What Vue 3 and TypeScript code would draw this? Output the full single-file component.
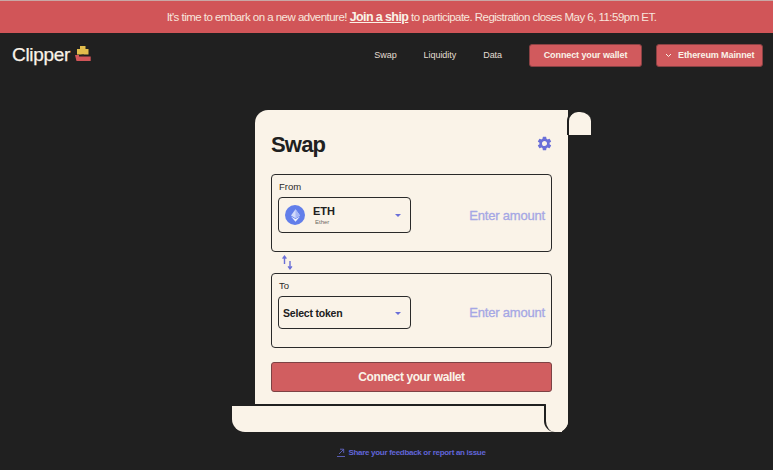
<script setup lang="ts">
const links: string[] = ['Swap', 'Liquidity', 'Data']
</script>

<template>
  <div class="page">
    <div class="banner">
      It's time to embark on a new adventure!&nbsp;<a class="join">Join a ship</a>&nbsp;to participate. Registration closes May 6, 11:59pm ET.
    </div>
    <header class="nav">
      <div class="brand">
        <span class="logo-text">Clipper</span>
        <svg class="ship" width="16" height="15" viewBox="0 0 16 15">
          <rect x="5" y="0" width="5.500" height="3" fill="#e2bd4c" />
          <rect x="2" y="3" width="11.500" height="5.500" fill="#e2bd4c" />
          <rect x="6.500" y="8.500" width="2.500" height="1" fill="#3a2a20" />
          <path d="M0 9h4v1.500h11.700V15H1.500z" fill="#d15558" />
        </svg>
      </div>
      <nav class="links">
        <a v-for="l in links" :key="l" class="link">{{ l }}</a>
      </nav>
      <button class="nav-btn wallet">Connect your wallet</button>
      <button class="nav-btn network">
        <svg width="7" height="5" viewBox="0 0 7 5"><path d="M1 1l2.500 2.500L6 1" fill="none" stroke="#faf3e8" stroke-width="1" /></svg>
        Ethereum Mainnet
      </button>
    </header>

    <main class="main">
      <section class="card">
        <div class="curl-top"></div>
        <div class="curl-bottom"></div>
        <div class="head">
          <h1>Swap</h1>
          <svg class="gear" width="17" height="17" viewBox="0 0 24 24">
            <path fill="#6a6fd8" d="M19.140 12.940c.04-.3.06-.61.06-.94 0-.32-.02-.64-.07-.94l2.030-1.580a.49.49 0 0 0 .12-.61l-1.920-3.320a.49.49 0 0 0-.59-.22l-2.390.96a7 7 0 0 0-1.620-.94l-.36-2.540a.48.48 0 0 0-.48-.41h-3.840a.47.47 0 0 0-.47.41l-.36 2.540c-.59.24-1.130.57-1.620.94l-2.390-.96a.48.48 0 0 0-.59.22L2.740 8.870a.47.47 0 0 0 .12.61l2.030 1.580c-.05.3-.09.63-.09.94s.02.64.07.94l-2.030 1.580a.49.49 0 0 0-.12.61l1.920 3.320c.12.22.37.29.59.22l2.390-.96c.5.38 1.030.7 1.620.94l.36 2.540c.05.24.24.41.48.41h3.840c.24 0 .44-.17.47-.41l.36-2.540c.59-.24 1.130-.56 1.620-.94l2.390.96c.22.08.47 0 .59-.22l1.920-3.320a.47.47 0 0 0-.12-.61zM12 15.600A3.610 3.610 0 0 1 8.400 12c0-1.980 1.620-3.600 3.600-3.600s3.600 1.620 3.600 3.600-1.620 3.600-3.600 3.600z" />
          </svg>
        </div>

        <div class="box from">
          <div class="label">From</div>
          <div class="row">
            <div class="select">
              <span class="eth-icon">
                <svg width="9" height="13" viewBox="0 0 10 14">
                  <path d="M5 0L0 7l5 3 5-3z" fill="#d3dbfa" />
                  <path d="M0 8l5 6 5-6-5 3z" fill="#eef1fd" />
                  <path d="M5 0v10l5-3z" fill="#a9b8f6" />
                </svg>
              </span>
              <span class="token">
                <span class="sym">ETH</span>
                <span class="name">Ether</span>
              </span>
              <span class="caret"></span>
            </div>
            <span class="amount">Enter amount</span>
          </div>
        </div>

        <div class="swap-row">
          <svg width="11" height="15" viewBox="0 0 11 15">
            <path d="M2.500 9V1.500M.6 3.600L2.500 1.200l1.900 2.400M8 6v7.500M6.100 11.400L8 13.800l1.900-2.400" fill="none" stroke="#6a6fd8" stroke-width="1.400" />
          </svg>
        </div>

        <div class="box to">
          <div class="label">To</div>
          <div class="row">
            <div class="select plain">
              <span class="sel-text">Select token</span>
              <span class="caret"></span>
            </div>
            <span class="amount">Enter amount</span>
          </div>
        </div>

        <button class="connect">Connect your wallet</button>
      </section>
    </main>

    <footer class="feedback">
      <svg width="9" height="9" viewBox="0 0 9 9"><path d="M0 8.500h8M2 6l4.500-4.500M3 1.200h3.700v3.700" fill="none" stroke="#6a6fd8" stroke-width=".8" /></svg>
      Share your feedback or report an issue
    </footer>
  </div>
</template>

<style>
html, body { margin: 0; background: #202020; }
</style>

<style scoped>
.page {
  width: 773px;
  height: 470px;
  overflow: hidden;
  background: #202020;
  font-family: "Liberation Sans", Arial, sans-serif;
  color: #faf3e8;
}
.banner {
  box-sizing: border-box;
  height: 33px;
  padding-left: 50px;
  border-top: 1px solid #c8a8a6;
  background: #d15558;
  display: flex;
  align-items: center;
  justify-content: center;
  font-size: 11.500px;
  letter-spacing: -0.53px;
  color: #f8e6dc;
}
.join {
  font-weight: 700;
  font-size: 12.500px;
  letter-spacing: -0.6px;
  color: #faf3e8;
  text-decoration: underline;
}
.nav {
  height: 44px;
  display: flex;
  align-items: center;
  padding: 0 10px 0 12px;
}
.brand {
  display: flex;
  align-items: center;
  gap: 5px;
  margin-right: auto;
}
.logo-text {
  font-size: 19px;
  font-weight: 400;
  letter-spacing: -0.3px;
  -webkit-text-stroke: 0.25px #faf3e8;
}
.ship { margin-top: -3px; }
.links {
  display: flex;
  gap: 27px;
  margin-right: 27px;
}
.link {
  font-size: 9px;
  letter-spacing: -0.05px;
  color: #e4ddd2;
}
.nav-btn {
  box-sizing: border-box;
  height: 23px;
  border: 1px solid #8a4143;
  border-radius: 3px;
  background: #d15a5d;
  color: #faf3e8;
  font: 700 9px "Liberation Sans", Arial, sans-serif;
  letter-spacing: -0.1px;
  white-space: nowrap;
  display: flex;
  align-items: center;
  justify-content: center;
}
.wallet { width: 113px; margin-right: 14px; }
.network { width: 107px; gap: 6px; padding: 0 0 0 8px; justify-content: flex-start; }
.main {
  display: flex;
  justify-content: center;
  padding-top: 33px;
  padding-left: 50px;
}
.card {
  position: relative;
  box-sizing: border-box;
  width: 313px;
  height: 322px;
  padding: 0 16px;
  background: #faf3e8;
  border-radius: 13px 0 11px 0;
}
.curl-top {
  position: absolute;
  left: 100%;
  top: 0;
  box-sizing: border-box;
  width: 24px;
  height: 25px;
  background: #faf3e8;
  border-left: 2px solid #202020;
  border-top: 2px solid #202020;
  border-radius: 11px 11px 0 0;
  margin-left: -1px;
}
.curl-bottom {
  position: absolute;
  left: -23px;
  bottom: 0;
  box-sizing: border-box;
  width: 330px;
  height: 28px;
  background: #faf3e8;
  border-top: 2.500px solid #202020;
  border-radius: 0 0 0 13px;
}
.card::after {
  content: "";
  position: absolute;
  right: 0;
  bottom: 0;
  box-sizing: border-box;
  width: 24px;
  height: 28px;
  background: #faf3e8;
  border-left: 2.500px solid #202020;
  border-radius: 2px 0 11px 11px;
}
.head {
  height: 64px;
  display: flex;
  align-items: center;
  justify-content: space-between;
}
.head h1 {
  margin: 5px 0 0;
  font-size: 22px;
  letter-spacing: -0.8px;
  font-weight: 700;
  color: #202020;
}
.gear { margin-top: 3px; margin-right: -1px; }
.box {
  box-sizing: border-box;
  width: 281px;
  border: 1.500px solid #2a2a2a;
  border-radius: 4px;
  padding: 6px 6px 0 6px;
}
.from { height: 78px; }
.to { height: 75px; }
.label {
  font-size: 9.500px;
  font-weight: 500;
  color: #2a2a2a;
  line-height: 12px;
  padding-left: 1px;
}
.row {
  display: flex;
  align-items: center;
  justify-content: space-between;
  margin-top: 4px;
}
.select {
  box-sizing: border-box;
  width: 133px;
  height: 36px;
  border: 1.500px solid #2a2a2a;
  border-radius: 4px;
  display: flex;
  align-items: center;
  padding: 0 9px 0 6px;
  color: #202020;
}
.plain { height: 33px; padding-left: 4px; }
.eth-icon {
  width: 20px;
  height: 20px;
  border-radius: 50%;
  background: #627eea;
  display: flex;
  align-items: center;
  justify-content: center;
  margin-right: 8px;
}
.token {
  display: flex;
  flex-direction: column;
  margin-right: auto;
  margin-top: 1px;
}
.sym { font-size: 11px; font-weight: 700; line-height: 13px; }
.name { font-size: 6px; color: #6d6a66; line-height: 8px; margin-left: 2px; }
.sel-text {
  font-size: 10.500px;
  letter-spacing: -0.2px;
  font-weight: 700;
  margin-right: auto;
}
.caret {
  width: 0;
  height: 0;
  border-left: 3px solid transparent;
  border-right: 3px solid transparent;
  border-top: 3px solid #6a6fd8;
  margin-top: 1px;
}
.amount {
  font-size: 13px;
  letter-spacing: -0.2px;
  -webkit-text-stroke: 0.3px #a5a7e4;
  color: #a5a7e4;
}
.swap-row {
  height: 21px;
  display: flex;
  align-items: center;
  padding-left: 11px;
}
.connect {
  display: block;
  box-sizing: border-box;
  width: 281px;
  height: 30px;
  margin-top: 14px;
  background: #d15e60;
  border: 1px solid #7d4244;
  border-radius: 3px;
  color: #faf3e8;
  font: 700 12px "Liberation Sans", Arial, sans-serif;
  letter-spacing: -0.4px;
}
.feedback {
  margin-top: 16px;
  padding-left: 50px;
  display: flex;
  align-items: center;
  justify-content: center;
  gap: 2px;
  font-size: 8px;
  font-weight: 700;
  letter-spacing: -0.3px;
  color: #6165d8;
}
</style>
